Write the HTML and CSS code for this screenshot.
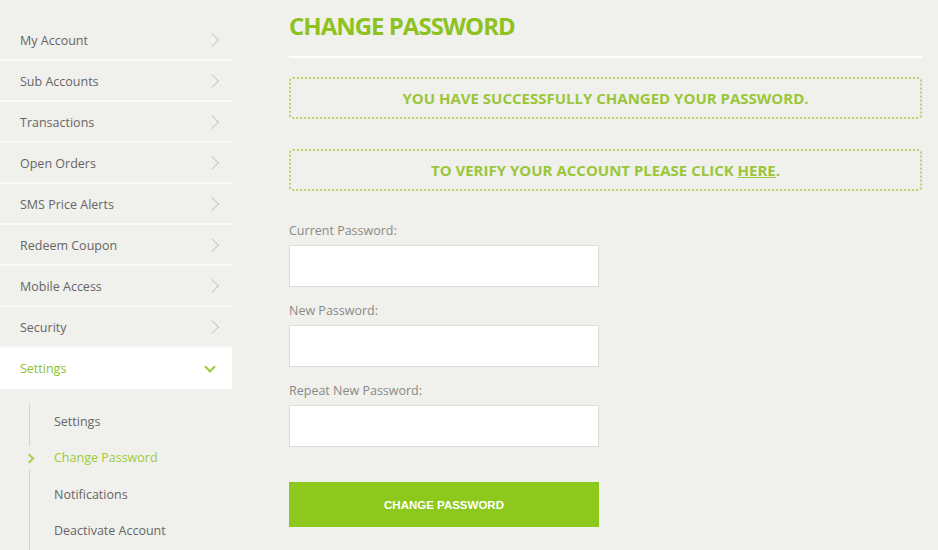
FILE: index.html
```html
<!DOCTYPE html>
<html lang="en">
<head>
  <meta charset="UTF-8">
  <meta name="viewport" content="width=device-width, initial-scale=1.0">
  <title>Change Password</title>
  <link rel="stylesheet" href="styles.css">
</head>
<body>
  <div class="sidebar">
    <ul class="menu">
      <li><a href="#">My Account</a></li>
      <li><a href="#">Sub Accounts</a></li>
      <li><a href="#">Transactions</a></li>
      <li><a href="#">Open Orders</a></li>
      <li><a href="#">SMS Price Alerts</a></li>
      <li><a href="#">Redeem Coupon</a></li>
      <li><a href="#">Mobile Access</a></li>
      <li><a href="#">Security</a></li>
      <li class="open"><a href="#">Settings</a></li>
    </ul>
    <ul class="submenu">
      <li><a href="#">Settings</a></li>
      <li class="active"><a href="#">Change Password</a></li>
      <li><a href="#">Notifications</a></li>
      <li><a href="#">Deactivate Account</a></li>
    </ul>
  </div>

  <div class="content">
    <h1>CHANGE PASSWORD</h1>
    <div class="notice">YOU HAVE SUCCESSFULLY CHANGED YOUR PASSWORD.</div>
    <div class="notice">TO VERIFY YOUR ACCOUNT PLEASE CLICK <a href="#">HERE</a>.</div>

    <form class="password-form">
      <label for="current">Current Password:</label>
      <input type="password" id="current">
      <label for="newpass">New Password:</label>
      <input type="password" id="newpass">
      <label for="repeat">Repeat New Password:</label>
      <input type="password" id="repeat">
      <button type="submit">CHANGE PASSWORD</button>
    </form>
  </div>
</body>
</html>
```

FILE: styles.css
```css
body {
  margin: 0;
  font-family: "Open Sans", Arial, sans-serif;
  background-color: #f0f0ec;
  display: flex;
  height: 550px;
  overflow: hidden;
}
ul {
  list-style: none;
  margin: 0;
  padding: 0;
}
a {
  text-decoration: none;
}
.sidebar {
  width: 232px;
  padding-top: 20px;
}
.menu li {
  border-bottom: 2px solid #f9f9f7;
}
.menu li:last-child {
  border-bottom: none;
}
.menu a {
  display: flex;
  align-items: center;
  justify-content: space-between;
  height: 38px;
  padding: 1px 12px 0 20px;
  font-size: 12.5px;
  color: #666;
}
.menu a::after {
  content: "";
  width: 9px;
  height: 9px;
  border-top: 1px solid #c8c8c4;
  border-right: 1px solid #c8c8c4;
  transform: rotate(45deg);
  margin-right: 3px;
}
.menu .open a {
  height: 41px;
  padding-top: 0;
  background: #fff;
  color: #8dc21f;
}
.menu .open a::after {
  width: 6px;
  height: 6px;
  border-top: none;
  border-right: 2px solid #9ccb3a;
  border-bottom: 2px solid #9ccb3a;
  transform: rotate(45deg);
  margin: -3px 6px 0 0;
}
.submenu {
  margin: 14px 0 0 29px;
  padding-top: 1px;
  border-left: 1px solid #d4d4d0;
}
.submenu li {
  position: relative;
}
.submenu a {
  display: block;
  line-height: 36.4px;
  padding-left: 24px;
  font-size: 12.5px;
  color: #666;
}
.submenu .active a {
  color: #9ccb3a;
}
.submenu .active::before {
  content: "";
  position: absolute;
  left: -4px;
  top: 6px;
  width: 8px;
  height: 24px;
  background: #f0f0ec;
}
.submenu .active::after {
  content: "";
  position: absolute;
  left: -4px;
  top: 15px;
  width: 5px;
  height: 5px;
  border-top: 2px solid #a9d24e;
  border-right: 2px solid #a9d24e;
  transform: rotate(45deg);
}
.content {
  margin-left: 57px;
  width: 633px;
}
h1 {
  margin: 0;
  padding: 9px 0 14px;
  font-size: 24px;
  font-weight: 700;
  letter-spacing: -1px;
  color: #8dc21f;
  border-bottom: 2px solid #fff;
}
.notice {
  margin-top: 19px;
  height: 38px;
  line-height: 38px;
  border: 2px dotted #b5d46a;
  border-radius: 4px;
  text-align: center;
  font-size: 15px;
  font-weight: 700;
  color: #9ac73a;
}
.notice + .notice {
  margin-top: 30px;
}
.notice a {
  color: #9ac73a;
  text-decoration: underline;
}
.password-form {
  display: flex;
  flex-direction: column;
  align-items: flex-start;
  padding-top: 31px;
}
.password-form label {
  font-size: 12.5px;
  color: #8a8a86;
  margin-bottom: 6px;
}
.password-form input {
  width: 310px;
  height: 42px;
  box-sizing: border-box;
  border: 1px solid #dcdcd8;
  background: #fff;
  margin-bottom: 15px;
}
.password-form button {
  margin-top: 20px;
  width: 310px;
  height: 45px;
  padding-top: 2px;
  border: none;
  background-color: #8dc81c;
  color: #fff;
  font-family: Arial, "Liberation Sans", sans-serif;
  font-weight: 700;
  font-size: 11.5px;
  cursor: pointer;
}
```
